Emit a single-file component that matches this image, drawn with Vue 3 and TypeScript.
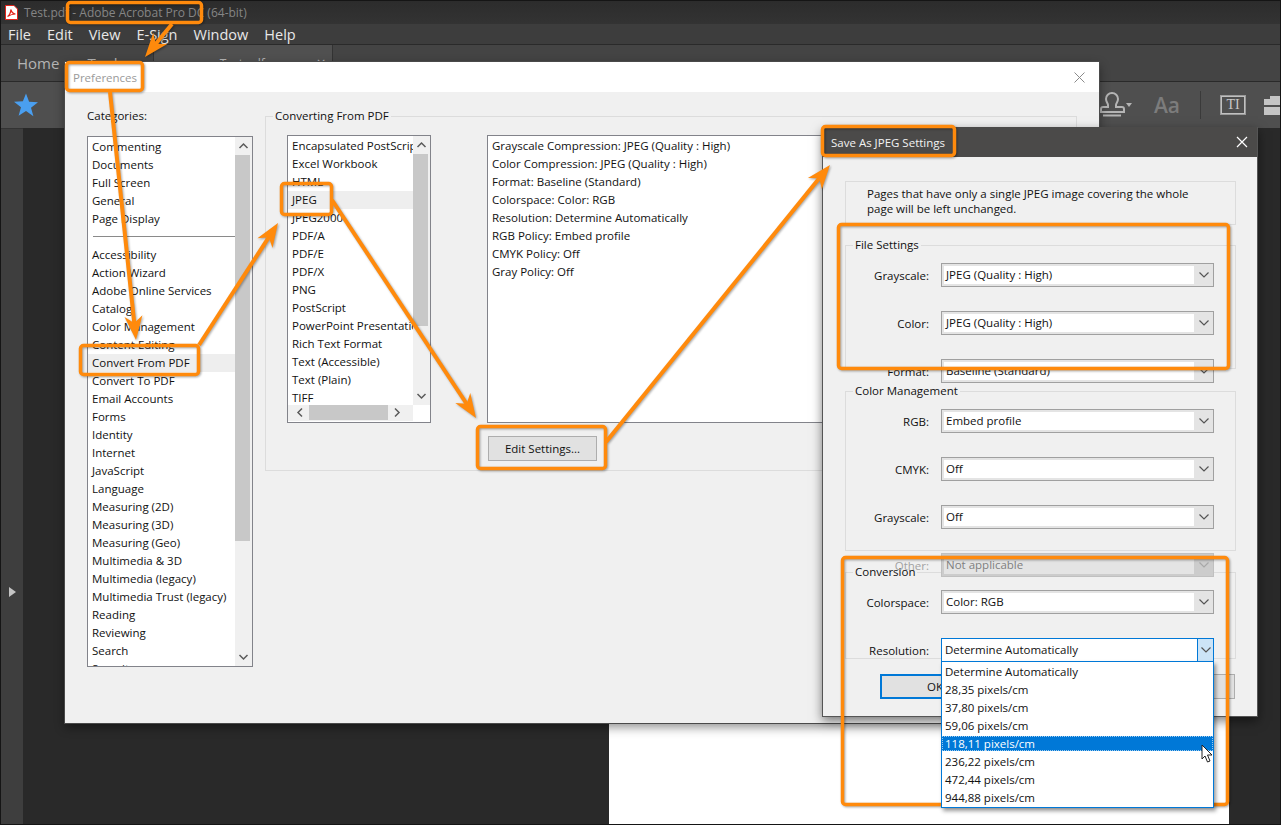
<script setup lang="ts">
const categories = [
  'Commenting', 'Documents', 'Full Screen', 'General', 'Page Display', '---',
  'Accessibility', 'Action Wizard', 'Adobe Online Services', 'Catalog', 'Color Management',
  'Content Editing', 'Convert From PDF', 'Convert To PDF', 'Email Accounts', 'Forms', 'Identity',
  'Internet', 'JavaScript', 'Language', 'Measuring (2D)', 'Measuring (3D)', 'Measuring (Geo)',
  'Multimedia & 3D', 'Multimedia (legacy)', 'Multimedia Trust (legacy)', 'Reading', 'Reviewing',
  'Search', 'Security',
]
const formats = [
  'Encapsulated PostScript', 'Excel Workbook', 'HTML', 'JPEG', 'JPEG2000', 'PDF/A', 'PDF/E', 'PDF/X',
  'PNG', 'PostScript', 'PowerPoint Presentation', 'Rich Text Format', 'Text (Accessible)', 'Text (Plain)', 'TIFF',
]
const details = [
  'Grayscale Compression: JPEG (Quality : High)',
  'Color Compression: JPEG (Quality : High)',
  'Format: Baseline (Standard)',
  'Colorspace: Color: RGB',
  'Resolution: Determine Automatically',
  'RGB Policy: Embed profile',
  'CMYK Policy: Off',
  'Gray Policy: Off',
]
const fileFields = [
  { label: 'Grayscale:', value: 'JPEG (Quality : High)' },
  { label: 'Color:', value: 'JPEG (Quality : High)' },
  { label: 'Format:', value: 'Baseline (Standard)' },
]
const colorFields = [
  { label: 'RGB:', value: 'Embed profile' },
  { label: 'CMYK:', value: 'Off' },
  { label: 'Grayscale:', value: 'Off' },
  { label: 'Other:', value: 'Not applicable', disabled: true },
]
const resolutions = [
  'Determine Automatically', '28,35 pixels/cm', '37,80 pixels/cm', '59,06 pixels/cm',
  '118,11 pixels/cm', '236,22 pixels/cm', '472,44 pixels/cm', '944,88 pixels/cm',
]
const menus = ['File', 'Edit', 'View', 'E-Sign', 'Window', 'Help']

// callout frames, in page coordinates
const frames = [
  { x: 67.5, y: 2.5, w: 134, h: 20 },
  { x: 66.5, y: 62.5, w: 76, h: 28 },
  { x: 80.5, y: 345.5, w: 118, h: 29 },
  { x: 281.5, y: 183.5, w: 50, h: 31 },
  { x: 477.5, y: 426.5, w: 128, h: 42 },
  { x: 822.5, y: 126.5, w: 132, h: 29 },
  { x: 838.5, y: 224.5, w: 390, h: 144 },
  { x: 842.5, y: 557.5, w: 385, h: 247 },
]

function arrow(x1: number, y1: number, x2: number, y2: number) {
  const len = Math.hypot(x2 - x1, y2 - y1)
  const ux = (x2 - x1) / len
  const uy = (y2 - y1) / len
  const at = (back: number, side: number) =>
    `${(x2 - ux * back - uy * side).toFixed(1)},${(y2 - uy * back + ux * side).toFixed(1)}`
  return {
    line: { x1, y1, x2: x2 - ux * 12, y2: y2 - uy * 12 },
    head: [at(0, 0), at(24, 9), at(17, 0), at(24, -9)].join(' '),
  }
}

const arrows = [
  arrow(172, 24, 145, 57),
  arrow(110, 92, 136, 340),
  arrow(199, 345, 278, 223),
  arrow(332, 200, 476, 418),
  arrow(606, 442, 830, 165),
]
</script>

<template>
  <div class="screen">
    <div class="acrobat">
      <div class="titlebar">
        <svg class="pdf-icon" width="13" height="15" viewBox="0 0 13 15">
          <path d="M.5.5h8.5l3.500 3.500v10.500h-12z" fill="#fff" stroke="#e2231a" />
          <path d="M2.500 11.500c2-1 3.500-4.500 3.300-7 1 3 2.500 4.500 4.700 4.500-3 0-5.500 1-8 2.500z" fill="none" stroke="#e2231a" stroke-width="1.200" />
        </svg>
        <span>Test.pdf - Adobe Acrobat Pro DC (64-bit)</span>
      </div>
      <div class="menubar">
        <span v-for="m in menus" :key="m">{{ m }}</span>
      </div>
      <div class="tabbar">
        <span class="tab-link">Home</span>
        <span class="tab-link">Tools</span>
        <div class="doc-tab"><span>Test.pdf</span><i>×</i></div>
      </div>
      <div class="toolbar">
        <svg width="26" height="26" viewBox="0 0 26 26" class="star">
          <path d="M13 1.500l3.100 8.300 8.900.4-7 5.500 2.400 8.600L13 19l-7.400 4.800L8 15.200 1 9.700l8.900-.4z" fill="#4a9ff0" />
        </svg>
        <div class="tools">
          <svg width="26" height="26" viewBox="0 0 26 26" fill="none" stroke="#b4b4b4" stroke-width="2">
            <path d="M9 13c0-2-2-3-2-6a6 6 0 0 1 12 0c0 3-2 4-2 6v2h6a2 2 0 0 1 2 2v3H2v-3a2 2 0 0 1 2-2h5z" />
            <path d="M4 23.500h18" />
          </svg>
          <i class="caret"></i>
          <span class="aa">Aa</span>
          <i class="tool-sep"></i>
          <div class="ti-box">TI</div>
          <svg class="case" width="24" height="20" viewBox="0 0 24 20">
            <path d="M6 4V1h11v3h6v6H0V4zM0 12h23v8H0z" fill="#c4c4c4" />
          </svg>
        </div>
      </div>
      <div class="workspace">
        <div class="side-rail"><i class="rail-arrow"></i></div>
        <div class="doc-area"><div class="page"></div></div>
      </div>
    </div>

    <!-- Preferences window -->
    <div class="window prefs">
      <div class="prefs-title">
        <span>Preferences</span>
        <svg width="11" height="11" viewBox="0 0 11 11" stroke="#8a8a8a"><path d="M.5.500l10 10M10.500.500l-10 10" /></svg>
      </div>
      <div class="prefs-body">
        <div class="cat-col">
          <div class="cat-label">Categories:</div>
          <div class="listbox cat-list">
            <div class="rows">
              <template v-for="c in categories" :key="c">
                <div v-if="c === '---'" class="row-sep"></div>
                <div v-else class="row" :class="{ picked: c === 'Convert From PDF' }">{{ c }}</div>
              </template>
            </div>
            <div class="vbar">
              <svg class="chev" width="17" height="18" viewBox="0 0 17 18"><path d="M4.500 11l4-4 4 4" /></svg>
              <div class="thumb cat-thumb"></div>
              <div class="track"></div>
              <svg class="chev" width="17" height="18" viewBox="0 0 17 18"><path d="M4.500 7l4 4 4-4" /></svg>
            </div>
          </div>
        </div>
        <fieldset class="group convert">
          <legend>Converting From PDF</legend>
          <div class="convert-cols">
            <div class="listbox fmt-list">
              <div class="rows">
                <div v-for="f in formats" :key="f" class="row" :class="{ picked: f === 'JPEG' }">{{ f }}</div>
              </div>
              <div class="vbar">
                <svg class="chev" width="17" height="18" viewBox="0 0 17 18"><path d="M4.500 11l4-4 4 4" /></svg>
                <div class="thumb fmt-thumb"></div>
                <div class="track"></div>
                <svg class="chev" width="17" height="18" viewBox="0 0 17 18"><path d="M4.500 7l4 4 4-4" /></svg>
              </div>
              <div class="hbar">
                <svg class="chev" width="18" height="15" viewBox="0 0 18 15"><path d="M11 3.500l-4 4 4 4" /></svg>
                <div class="hthumb"></div>
                <svg class="chev" width="18" height="15" viewBox="0 0 18 15"><path d="M7 3.500l4 4-4 4" /></svg>
              </div>
            </div>
            <div class="detail-col">
              <div class="listbox detail-box">
                <div v-for="d in details" :key="d" class="row">{{ d }}</div>
              </div>
              <button class="btn edit-btn">Edit Settings...</button>
            </div>
          </div>
        </fieldset>
      </div>
    </div>

    <!-- Save As JPEG Settings window -->
    <div class="window jpeg">
      <div class="jpeg-title">
        <span>Save As JPEG Settings</span>
        <svg width="12" height="12" viewBox="0 0 12 12" stroke="#fff" stroke-width="1.200"><path d="M1 1l10 10M11 1L1 11" /></svg>
      </div>
      <div class="jpeg-body">
        <div class="note">Pages that have only a single JPEG image covering the whole<br />page will be left unchanged.</div>
        <fieldset class="group settings file-set">
          <legend>File Settings</legend>
          <div v-for="f in fileFields" :key="f.label" class="field">
            <label>{{ f.label }}</label>
            <div class="select">
              <span class="val">{{ f.value }}</span>
              <span class="drop"><svg width="12" height="8" viewBox="0 0 12 8"><path d="M1.500 1.500l4.500 4.500 4.500-4.500" /></svg></span>
            </div>
          </div>
        </fieldset>
        <fieldset class="group settings color-set">
          <legend>Color Management</legend>
          <div v-for="f in colorFields" :key="f.label" class="field" :class="{ off: f.disabled }">
            <label>{{ f.label }}</label>
            <div class="select">
              <span class="val">{{ f.value }}</span>
              <span class="drop"><svg width="12" height="8" viewBox="0 0 12 8"><path d="M1.500 1.500l4.500 4.500 4.500-4.500" /></svg></span>
            </div>
          </div>
        </fieldset>
        <fieldset class="group settings conv-set">
          <legend>Conversion</legend>
          <div class="field">
            <label>Colorspace:</label>
            <div class="select">
              <span class="val">Color: RGB</span>
              <span class="drop"><svg width="12" height="8" viewBox="0 0 12 8"><path d="M1.500 1.500l4.500 4.500 4.500-4.500" /></svg></span>
            </div>
          </div>
          <div class="field">
            <label>Resolution:</label>
            <div class="select open">
              <span class="val">Determine Automatically</span>
              <span class="drop"><svg width="12" height="8" viewBox="0 0 12 8"><path d="M1.500 1.500l4.500 4.500 4.500-4.500" /></svg></span>
              <div class="popup">
                <div v-for="r in resolutions" :key="r" class="opt" :class="{ hot: r.startsWith('118') }">{{ r }}</div>
                <svg class="cursor" width="14" height="20" viewBox="0 0 14 20">
                  <path d="M1 1v14l3-3 2.500 6 2.500-1-2.500-6H11z" fill="#fff" stroke="#222" />
                </svg>
              </div>
            </div>
          </div>
        </fieldset>
        <div class="jpeg-actions">
          <button class="btn ok-btn">OK</button>
          <button class="btn cancel-btn">Cancel</button>
        </div>
      </div>
    </div>

    <!-- orange callouts drawn over the screenshot -->
    <svg class="callouts" width="1281" height="825" viewBox="0 0 1281 825">
      <g fill="none" stroke="#ff8a0c" stroke-width="3.500">
        <rect v-for="(f, i) in frames" :key="i" :x="f.x" :y="f.y" :width="f.w" :height="f.h" rx="3" />
        <line v-for="(a, i) in arrows" :key="'l' + i" v-bind="a.line" stroke-width="4" />
      </g>
      <polygon v-for="(a, i) in arrows" :key="'h' + i" :points="a.head" fill="#ff8a0c" />
    </svg>
  </div>
</template>

<style>
html, body {
  margin: 0;
  background: #292929;
}
</style>

<style scoped>
.screen {
  position: relative;
  width: 1281px;
  height: 825px;
  overflow: hidden;
  font-family: "Open Sans", "Noto Sans", sans-serif;
  font-size: 11.5px;
  color: #111;
}

/* Acrobat behind the dialogs */
.acrobat {
  display: flex;
  flex-direction: column;
  height: 100%;
  box-sizing: border-box;
  border: 1px solid #151515;
  background: #292929;
}
.titlebar {
  display: flex;
  align-items: center;
  gap: 6px;
  height: 23px;
  padding-left: 4px;
  background: linear-gradient(#2c2c2c, #333);
  color: #858585;
  font-size: 12px;
}
.menubar {
  display: flex;
  align-items: center;
  height: 20px;
  padding-left: 7px;
  gap: 16px;
  background: #3d3d3d;
  color: #e8e8e8;
  font-size: 14.5px;
}
.tabbar {
  display: flex;
  align-items: center;
  height: 36px;
  border-top: 1px solid #2a2a2a;
  border-bottom: 1px solid #2a2a2a;
  padding-left: 16px;
  background: #444;
  color: #b4b4b4;
  font-size: 15px;
}
.tab-link {
  margin-right: 28px;
}
.doc-tab {
  display: flex;
  justify-content: space-between;
  align-items: center;
  align-self: stretch;
  width: 180px;
  box-sizing: border-box;
  margin-left: 0;
  padding: 0 6px 0 66px;
  background: #505050;
  border-left: 1px solid #333;
  border-right: 1px solid #333;
  font-size: 12px;
}
.doc-tab i {
  font-style: normal;
  font-size: 16px;
}
.toolbar {
  display: flex;
  align-items: center;
  height: 46px;
  padding-left: 12px;
  background: #4f4f4f;
  overflow: hidden;
}
.tools {
  display: flex;
  align-items: center;
  margin-left: auto;
  margin-right: -8px;
}
.caret {
  width: 0;
  height: 0;
  margin: 0 0 0 1px;
  border: 3.500px solid transparent;
  border-top: 4px solid #b4b4b4;
  border-bottom: 0;
}
.aa {
  margin-left: 22px;
  color: #7c7c7c;
  font-size: 21px;
  font-weight: 600;
}
.tool-sep {
  width: 1px;
  height: 28px;
  margin: 0 20px;
  background: #3a3a3a;
}
.ti-box {
  width: 22px;
  height: 16px;
  border: 1px solid #c0c0c0;
  outline: 1px solid #9a9a9a;
  outline-offset: 0;
  text-align: center;
  font-family: "Liberation Serif", serif;
  font-size: 14px;
  line-height: 16px;
  color: #c8c8c8;
}
.case {
  margin-left: 19px;
  flex: none;
}
.workspace {
  flex: 1;
  display: flex;
  min-height: 0;
}
.side-rail {
  display: flex;
  align-items: center;
  width: 22px;
  padding-top: 0;
  background: #3e3e3e;
  border-top: 1px solid #333;
}
.rail-arrow {
  width: 0;
  height: 0;
  margin: 230px 0 0 8px;
  border-left: 7px solid #c4c4c4;
  border-top: 5px solid transparent;
  border-bottom: 5px solid transparent;
}
.doc-area {
  flex: 1;
  padding: 60px 0 0 586px;
  overflow: hidden;
}
.page {
  width: 620px;
  height: 100%;
  background: #fff;
}

/* windows */
.window {
  position: absolute;
  box-sizing: border-box;
  background: #f0f0f0;
}
.prefs {
  left: 65px;
  top: 62px;
  width: 1034px;
  height: 661px;
  box-shadow: 0 0 0 1px #4a4a4a, 0 4px 10px rgba(0, 0, 0, 0.45);
}
.prefs-title {
  display: flex;
  align-items: center;
  justify-content: space-between;
  height: 30px;
  padding: 0 14px 0 8px;
  background: #fff;
  color: #9a9a9a;
}
.prefs-body {
  display: flex;
  gap: 12px;
  padding: 16px 22px 0;
}
.cat-col {
  flex: none;
  width: 166px;
}
.cat-label {
  line-height: 16px;
  margin-bottom: 12px;
}
.listbox {
  display: flex;
  box-sizing: border-box;
  background: #fff;
  border: 1px solid #82838a;
  overflow: hidden;
}
.rows {
  flex: 1;
  min-width: 0;
  padding-top: 1px;
  overflow: hidden;
}
.row {
  height: 18px;
  padding-left: 4px;
  line-height: 18px;
  white-space: nowrap;
}
.row.picked {
  background: #eeeeee;
}
.row-sep {
  height: 18px;
  margin: 0 0 0 5px;
  background: linear-gradient(#0000 8px, #8a8a8a 8px, #8a8a8a 9px, #0000 9px);
}
.cat-list {
  height: 531px;
}
.vbar {
  display: flex;
  flex-direction: column;
  flex: none;
  width: 17px;
  background: #f0f0f0;
}
.thumb {
  width: 15px;
  background: #c8c8c8;
}
.cat-thumb {
  height: 386px;
}
.track {
  flex: 1;
}
.chev {
  flex: none;
  fill: none;
  stroke: #5a5a5a;
  stroke-width: 1.500;
}
.group {
  margin: 0;
  padding: 0;
  min-width: 0;
  border: 1px solid #dcdcdc;
}
.group legend {
  margin-left: 7px;
  padding: 0 2px;
  line-height: 16px;
}
.convert {
  flex: 1;
  height: 363px;
  box-sizing: border-box;
}
.convert-cols {
  display: flex;
  gap: 56px;
  padding: 11px 0 0 21px;
}
.fmt-list {
  display: grid;
  grid-template-columns: 125px 17px;
  grid-template-rows: 269px 17px;
  width: 144px;
  height: 288px;
  flex: none;
}
.fmt-thumb {
  height: 172px;
}
.hbar {
  display: flex;
  align-items: flex-start;
  grid-column: 1;
  background: #f0f0f0;
  height: 16px;
}
.hbar .chev:first-child {
  margin-left: 3px;
}
.hthumb {
  width: 79px;
  height: 15px;
  background: #c8c8c8;
}
.detail-col {
  flex: 1;
  padding-right: 21px;
}
.detail-box {
  display: block;
  height: 288px;
  padding-top: 1px;
}
.btn {
  display: block;
  box-sizing: border-box;
  height: 25px;
  padding: 0;
  background: #e1e1e1;
  border: 1px solid #adadad;
  font: inherit;
  color: #111;
}
.edit-btn {
  width: 109px;
  margin: 13px 0 0 1px;
}

/* JPEG settings */
.jpeg {
  left: 822px;
  top: 127px;
  width: 436px;
  height: 590px;
  border: 1px solid #555;
  border-top: 0;
  box-shadow: 0 4px 10px rgba(0, 0, 0, 0.5);
}
.jpeg-title {
  display: flex;
  align-items: center;
  justify-content: space-between;
  height: 30px;
  padding: 0 9px 0 8px;
  background: #4b4a49;
  color: #f2f2f2;
}
.jpeg-body {
  padding: 24px 21px 0 22px;
}
.note {
  box-sizing: border-box;
  height: 44px;
  padding: 4px 0 0 21px;
  border: 1px solid #dcdcdc;
  line-height: 15px;
}
.settings {
  display: flex;
  flex-direction: column;
  gap: 12px;
  box-sizing: border-box;
}
.settings legend {
  margin-bottom: 10px;
}
.file-set {
  margin-top: 12px;
  height: 132px;
}
.color-set {
  margin-top: 14px;
  height: 168px;
}
.conv-set {
  margin-top: 13px;
  height: 95px;
}
.field {
  display: flex;
  align-items: center;
  gap: 12px;
  height: 24px;
}
.field + .field {
  margin-top: 12px;
}
.field label {
  flex: none;
  width: 83px;
  text-align: right;
}
.select {
  position: relative;
  display: flex;
  box-sizing: border-box;
  width: 273px;
  height: 24px;
  background: #e4e4e4;
  border: 1px solid #a0a0a0;
}
.val {
  flex: 1;
  margin: 2px 0 2px 2px;
  padding-left: 2px;
  background: #fff;
  line-height: 18px;
}
.drop {
  display: flex;
  align-items: center;
  justify-content: center;
  flex: none;
  width: 19px;
}
.drop svg {
  fill: none;
  stroke: #555;
  stroke-width: 1.200;
}
.off label {
  color: #a2a2a2;
}
.off .select {
  background: #cccccc;
  border-color: #c0c0c0;
}
.off .val {
  background: #e4e4e4;
  color: #7f7f7f;
}
.off .drop svg {
  stroke: #a8a8a8;
}
.open {
  background: #fff;
  border-color: #0078d7;
}
.open .val {
  margin: 0;
  padding-left: 3px;
  line-height: 22px;
}
.open .drop {
  width: 15px;
  background: #cce4f7;
  border-left: 1px solid #0078d7;
}
.popup {
  position: absolute;
  left: -1px;
  right: -1px;
  top: 22px;
  z-index: 2;
  box-sizing: border-box;
  height: 147px;
  padding-top: 1px;
  background: #fff;
  border: 1px solid #0078d7;
  box-shadow: 2px 3px 4px rgba(0, 0, 0, 0.4);
}
.opt {
  height: 18px;
  padding-left: 3px;
  line-height: 18px;
}
.opt.hot {
  height: 15px;
  margin: 1px 0 2px;
  background: #0078d7;
  outline: 1px dotted #9ccbf0;
  outline-offset: -1px;
  color: #fff;
  line-height: 15px;
}
.cursor {
  position: absolute;
  left: 259px;
  top: 82px;
}
.jpeg-actions {
  display: flex;
  justify-content: space-between;
  margin: 15px 1px 0 35px;
}
.ok-btn {
  width: 110px;
  border: 2px solid #0078d7;
}
.cancel-btn {
  width: 110px;
}

.callouts {
  position: absolute;
  left: 0;
  top: 0;
  filter: drop-shadow(1px 1px 1px rgba(0, 0, 0, 0.35));
  pointer-events: none;
}
</style>
